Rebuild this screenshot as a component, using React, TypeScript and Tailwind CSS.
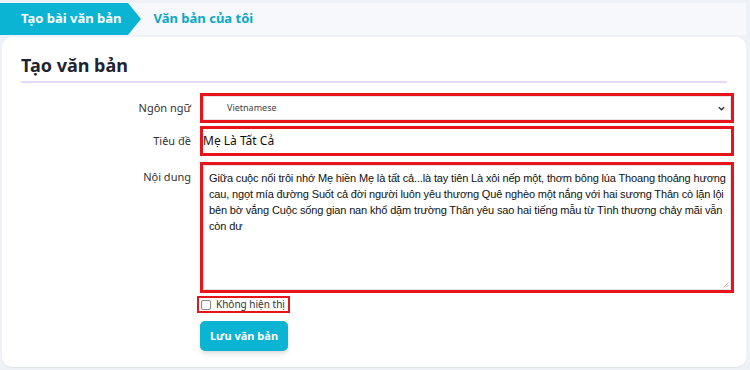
import React from 'react';

const lines = [
  'Giữa cuộc nổi trôi nhớ Mẹ hiền Mẹ là tất cả...là tay tiên Là xôi nếp một, thơm bông lúa Thoang thoảng hương',
  'cau, ngọt mía đường Suốt cả đời người luôn yêu thương Quê nghèo một nắng với hai sương Thân cò lặn lội',
  'bên bờ vắng Cuộc sống gian nan khổ dặm trường Thân yêu sao hai tiếng mẫu từ Tình thương chảy mãi vẫn',
  'còn dư',
];

export default function App() {
  return (
    <div className="w-[750px] h-[370px] bg-[#eef1f5] overflow-hidden" style={{ fontFamily: '"Noto Sans", "Open Sans", sans-serif' }}>
      {/* Tabs */}
      <div className="pt-[3px] pr-[4px]">
        <div className="flex items-center h-[32px] bg-[#f7f8fb]">
          <div className="relative h-full flex items-center bg-[#0cb4d4] pl-[21px] pr-[6px] text-white text-[13px] font-bold">
            Tạo bài văn bản
            <span className="absolute left-full top-0 w-0 h-0 border-y-[16px] border-y-transparent border-l-[13px] border-l-[#0cb4d4]" />
          </div>
          <div className="ml-[26px] text-[13px] font-bold text-[#0aa9c6]">Văn bản của tôi</div>
        </div>
      </div>

      {/* Card */}
      <div className="mt-[2px] ml-[2px] mr-[4px] h-[331px] bg-white rounded-[10px] border-b border-[#dfe3ea] px-[19px]">
        <div className="pt-[16px] pb-[4px] border-b-2 border-[#e6d9fb]">
          <h1 className="text-[18px] font-bold text-[#1f2433] leading-[24px]">Tạo văn bản</h1>
        </div>

        <div className="grid grid-cols-[170px_1fr] gap-x-[9px] mt-[10px] text-[11px] text-[#333]">
          <div className="text-right flex items-center justify-end h-[30px]">Ngôn ngữ</div>
          <div className="border-[3px] border-[#e8141c] h-[30px]">
            <div className="h-full flex items-center justify-between border border-[#e1e5ea] pl-[23px] pr-[4px]">
              <span className="text-[9px] text-[#444]">Vietnamese</span>
              <svg width="9" height="9" viewBox="0 0 10 10" fill="none" stroke="#333" strokeWidth="1.6">
                <path d="M2 3.5 L5 6.5 L8 3.5" />
              </svg>
            </div>
          </div>

          <div className="text-right flex items-center justify-end h-[30px] mt-[3px]">Tiêu đề</div>
          <div className="border-[3px] border-[#e8141c] h-[30px] mt-[3px] flex items-center text-[12px] text-[#111]">
            Mẹ Là Tất Cả
          </div>

          <div className="text-right pt-[7px] mt-[6px]">Nội dung</div>
          <div className="relative border-[3px] border-[#e8141c] h-[131px] mt-[6px]">
            <div
              className="h-full border border-[#e1e5ea] pl-[5px] pr-[4px] pt-[4px] text-[11px] leading-[16px] text-[#111] tracking-[-0.15px]"
              style={{ fontFamily: '"Liberation Sans", Arial, sans-serif' }}
            >
              {lines.map((l) => (
                <div key={l} className="whitespace-nowrap">{l}</div>
              ))}
            </div>
            <svg className="absolute right-[2px] bottom-[2px]" width="6" height="6" viewBox="0 0 6 6" stroke="#999" strokeWidth="0.8">
              <path d="M0.5 5.5 L5.5 0.5 M3 5.5 L5.5 3" />
            </svg>
          </div>

          <div />
          <div className="mt-[3px]">
            <div className="inline-flex items-center gap-[5px] border-2 border-[#e8141c] h-[17px] pl-[2px] pr-[3px] ml-[-3px] text-[10px] text-[#333]">
              <span className="w-[10px] h-[10px] border border-[#888] rounded-[2px] bg-white" />
              Không hiện thị
            </div>
          </div>

          <div />
          <div className="mt-[7px]">
            <button className="w-[88px] h-[30px] rounded-[5px] bg-[#0cb4d4] text-white text-[11px] font-bold shadow-md">
              Lưu văn bản
            </button>
          </div>
        </div>
      </div>
    </div>
  );
}
